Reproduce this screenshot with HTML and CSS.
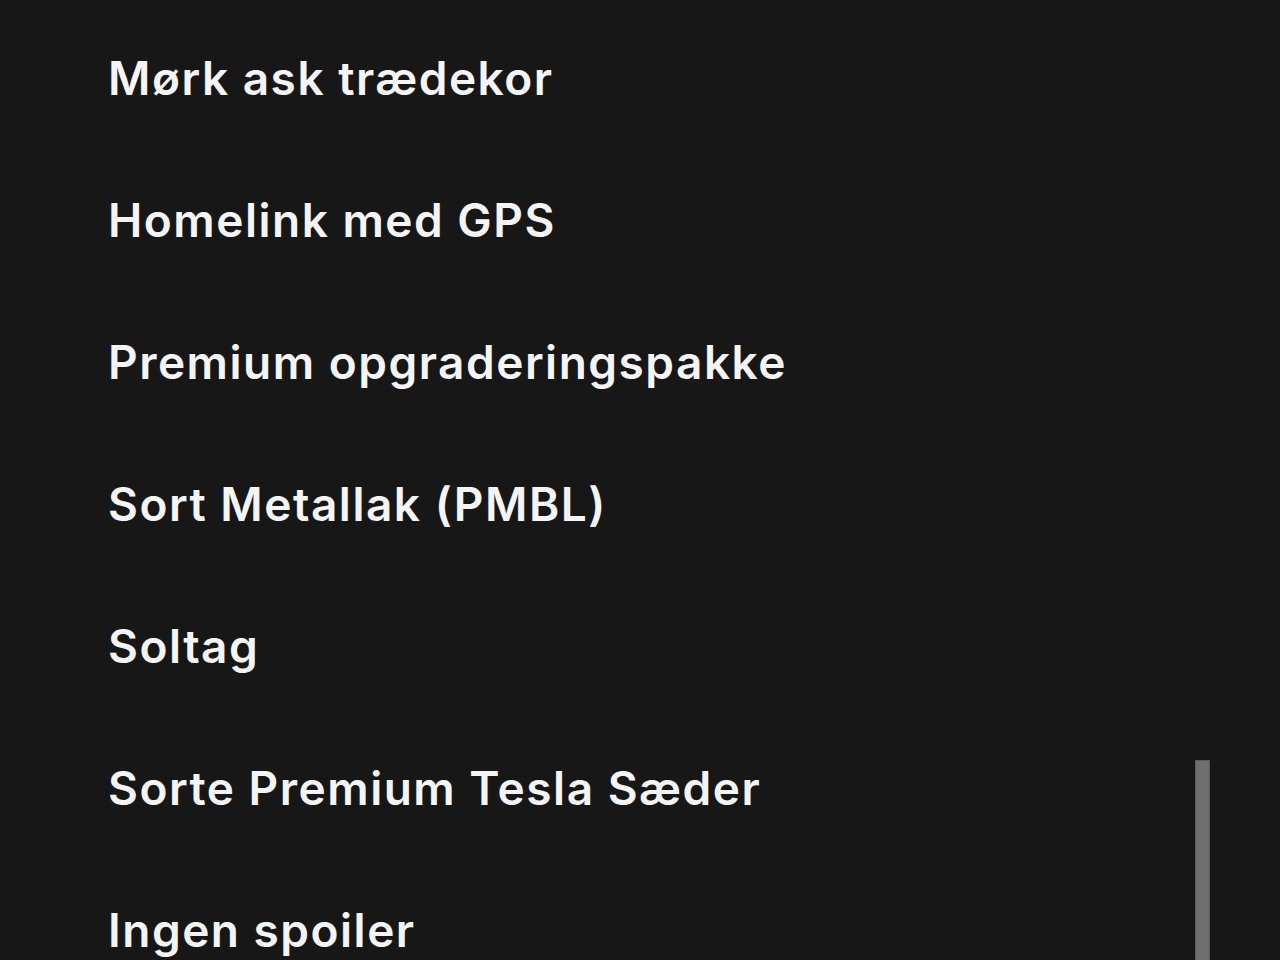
FILE: index.html
```html
<!DOCTYPE html>
<html lang="da">
<head>
<meta charset="utf-8">
<link rel="stylesheet" href="styles.css">
</head>
<body>
<div class="page">
  <ul class="options">
    <li class="option">Mørk ask trædekor</li>
    <li class="option">Homelink med GPS</li>
    <li class="option">Premium opgraderingspakke</li>
    <li class="option">Sort Metallak (PMBL)</li>
    <li class="option">Soltag</li>
    <li class="option">Sorte Premium Tesla Sæder</li>
    <li class="option">Ingen spoiler</li>
  </ul>
  <div class="scrollbar"></div>
</div>
</body>
</html>
```
FILE: styles.css
```css
html, body {
  margin: 0;
  padding: 0;
  background: #171717;
}
.page {
  position: relative;
  width: 1280px;
  height: 960px;
  overflow: hidden;
  background: #171717;
}
.options {
  list-style: none;
  margin: 0;
  padding: 7px 0 0 108px;
  display: flex;
  flex-direction: column;
}
.option {
  height: 142px;
  line-height: 142px;
  font-family: Inter, "Noto Sans", sans-serif;
  font-weight: 600;
  font-size: 46px;
  letter-spacing: 1.5px;
  color: #f4f4f4;
  white-space: nowrap;
}
.scrollbar {
  position: absolute;
  left: 1195px;
  top: 760px;
  width: 13px;
  height: 220px;
  background: #6f6f6f;
  border: 1px solid #5a5a5a;
}
```
